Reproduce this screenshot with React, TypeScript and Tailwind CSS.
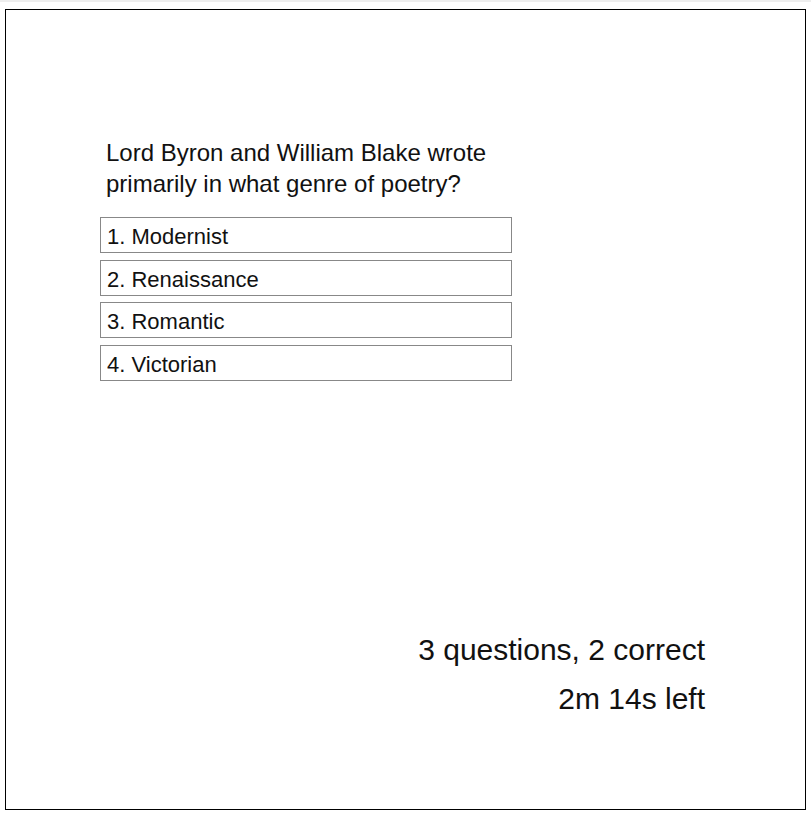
const options = ['Modernist', 'Renaissance', 'Romantic', 'Victorian'];

export default function App() {
  return (
    <div className="min-h-screen bg-white font-['Liberation_Sans',Arial,sans-serif] text-[#111]">
      <div className="h-[2px] bg-[#eeeeee]" />
      <div className="ml-[5px] mt-[7px] flex h-[801px] w-[801px] flex-col border border-black">
        <div className="ml-[94px] mt-[127px] w-[412px]">
          <p className="px-[6px] text-[24px] leading-[31px]">
            Lord Byron and William Blake wrote primarily in what genre of poetry?
          </p>
          <ul className="mt-[18px] flex flex-col gap-[6.5px]">
            {options.map((o, i) => (
              <li key={o} className="h-[36px] border border-[#888] px-[6px] pt-[1px] text-[22px] leading-[35px]">
                {i + 1}. {o}
              </li>
            ))}
          </ul>
        </div>
        <div className="mr-[100px] mt-auto mb-[86px] text-right text-[30px] leading-[49px]">
          <p>3 questions, 2 correct</p>
          <p>2m 14s left</p>
        </div>
      </div>
    </div>
  );
}
